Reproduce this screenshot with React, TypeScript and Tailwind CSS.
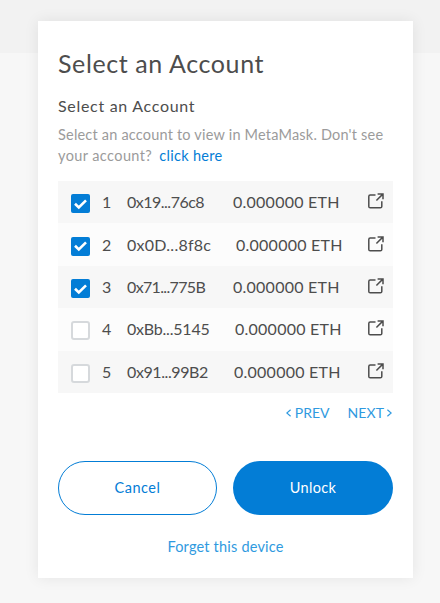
type Account = {
  index: number;
  address: string;
  checked: boolean;
  addressClass: string;
};

const accounts: Account[] = [
  { index: 1, address: "0x19...76c8", checked: true, addressClass: "w-[106px] tracking-[-0.5px]" },
  { index: 2, address: "0x0D...8f8c", checked: true, addressClass: "w-[109px] tracking-[0.25px]" },
  { index: 3, address: "0x71...775B", checked: true, addressClass: "w-[106px] tracking-[-0.65px]" },
  { index: 4, address: "0xBb...5145", checked: false, addressClass: "w-[108px] tracking-[-0.2px]" },
  { index: 5, address: "0x91...99B2", checked: false, addressClass: "w-[107px] tracking-[-0.4px]" },
];

function Checkbox({ checked }: { checked: boolean }) {
  return checked ? (
    <span className="mt-[3px] flex size-[19px] shrink-0 items-center justify-center rounded-[2px] bg-[#037dd6]">
      <svg width="15" height="12" viewBox="0 0 15 12" fill="none" stroke="#fff" strokeWidth="2.6">
        <path d="M2 5.8 L5.8 9.5 L13 2.3" />
      </svg>
    </span>
  ) : (
    <span className="mt-[3px] size-[19px] shrink-0 rounded-[3px] border-2 border-[#d6d9dc] bg-white" />
  );
}

function ExternalIcon() {
  return (
    <svg className="-mt-[2px]" width="16" height="16" viewBox="0 0 16 16" fill="none" stroke="#4d4d4d" strokeWidth="1.5">
      <path d="M7.5 2H2.2Q.8 2 .8 3.4V13.4Q.8 14.8 2.2 14.8H12.4Q13.8 14.8 13.8 13.4V8.2" />
      <path d="M9.6 .9H15V6.3M14.8 1.1L8.4 7.5" />
    </svg>
  );
}

export default function App() {
  return (
    <div className="h-[603px] w-[440px] overflow-hidden bg-[linear-gradient(#f2f2f2_53px,#f7f7f7_53px)] pt-[21px] pl-[38px] font-['Lato','Liberation_Sans',sans-serif] text-[#4d4d4d]">
      <main className="flex h-[557px] w-[375px] flex-col bg-white px-5 shadow-[0_0_14px_rgba(0,0,0,0.08)]">
        <h1 className="mt-[25px] h-[34px] text-[25px] leading-[34px] whitespace-nowrap">
          <span className="tracking-[0.6px]">Select an Account</span>
        </h1>
        <h2 className="mt-[15px] h-[22px] text-[16px] leading-[22px] whitespace-nowrap">
          <span className="tracking-[0.7px]">Select an Account</span>
        </h2>
        <p className="mt-[7px] h-[42px] text-[14.5px] leading-[21px] whitespace-nowrap text-[#9b9b9b]">
          <span className="tracking-[0.2px]">Select an account to view in MetaMask. Don't see</span>
          <br />
          <span className="tracking-[0.4px]">your account?</span>
          <a className="ml-[7px] tracking-[0.3px] text-[#037dd6]">click here</a>
        </p>
        <div className="mt-[15px] flex h-[212px] flex-col">
          {accounts.map((a) => (
            <div key={a.index} className="flex flex-1 items-center pl-[13px] text-[16px] leading-[22px] whitespace-nowrap odd:bg-[#f7f7f7] even:bg-[#fcfcfc]">
              <Checkbox checked={a.checked} />
              <span className="ml-[12px] w-[25px] shrink-0">{a.index}</span>
              <span className={`shrink-0 ${a.addressClass}`}>
                <span>{a.address}</span>
              </span>
              <span className="tracking-[0.25px]">0.000000 ETH</span>
              <span className="mr-[9px] ml-auto">
                <ExternalIcon />
              </span>
            </div>
          ))}
        </div>
        <div className="mt-[10px] flex h-[20px] justify-end gap-[18px] text-[14px] leading-[20px] text-[#2f9ae0]">
          <span className="flex items-center gap-[4px]">
            <svg width="5" height="8" viewBox="0 0 5 8" fill="none" stroke="currentColor" strokeWidth="1.2">
              <path d="M4.6 .8L.8 4L4.6 7.2" />
            </svg>
            PREV
          </span>
          <span className="flex items-center gap-[3px] pr-px">
            <span className="tracking-[0.1px]">NEXT</span>
            <svg width="5" height="8" viewBox="0 0 5 8" fill="none" stroke="currentColor" strokeWidth="1.2">
              <path d="M.4 .8L4.2 4L.4 7.2" />
            </svg>
          </span>
        </div>
        <div className="mt-[38px] flex h-[54px] gap-4 text-[14.5px]">
          <button className="w-[159px] rounded-full border border-[#037dd6] text-[#037dd6]">
            <span className="tracking-[0.5px]">Cancel</span>
          </button>
          <button className="w-[160px] rounded-full bg-[#037dd6] text-white">
            <span className="tracking-[0.3px]">Unlock</span>
          </button>
        </div>
        <a className="mt-[22px] text-center text-[14.5px] leading-[20px] text-[#2f9ae0]">
          <span className="tracking-[0.2px]">Forget this device</span>
        </a>
      </main>
    </div>
  );
}
